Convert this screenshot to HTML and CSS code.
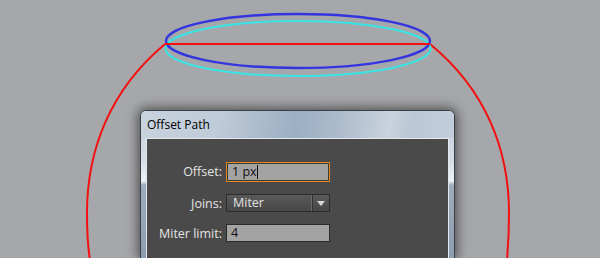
FILE: index.html
```html
<!DOCTYPE html>
<html lang="en">
  <head>
    <meta charset="UTF-8" />
    <title>Offset Path</title>
    <link rel="stylesheet" href="styles.css">
  </head>
  <body>
    <!-- artboard drawing behind the dialog -->
    <svg class="artboard" width="600" height="258" viewBox="0 0 600 258">
      <path class="red" d="M165,44 C110,90 87,150 87,213 C87,235 88,248 90,260" />
      <path class="red" d="M430,44 C486,90 509,150 509,213 C509,235 508,248 507,260" />
      <ellipse class="cyan" cx="298" cy="48.5" rx="132.5" ry="27.5" />
      <ellipse class="blue" cx="298" cy="41" rx="132" ry="27" />
      <line class="red" x1="165" y1="44" x2="430" y2="44" />
    </svg>

    <div class="dialog">
      <div class="titlebar">Offset Path</div>
      <div class="panel">
        <div class="form">
          <label class="lbl">Offset:</label>
          <div class="field focus">1 px<span class="caret"></span></div>

          <label class="lbl">Joins:</label>
          <div class="select">
            <span class="select-text">Miter</span>
            <span class="select-btn"></span>
          </div>

          <label class="lbl">Miter limit:</label>
          <div class="field">4</div>
        </div>
      </div>
    </div>
  </body>
</html>
```

FILE: styles.css
```css
* {
  margin: 0;
  padding: 0;
  box-sizing: border-box;
}

body {
  background-color: #a6a7aa;
  width: 600px;
  height: 258px;
  overflow: hidden;
  position: relative;
  font-family: "Open Sans", "Noto Sans", sans-serif;
}

.artboard {
  position: absolute;
  left: 0;
  top: 0;
}

.artboard .red {
  fill: none;
  stroke: #f41010;
  stroke-width: 2;
}

.artboard .blue {
  fill: none;
  stroke: #3535e0;
  stroke-width: 2.4;
}

.artboard .cyan {
  fill: none;
  stroke: #38e4e4;
  stroke-width: 2;
}

/* dialog window */
.dialog {
  position: absolute;
  left: 140px;
  top: 110px;
  width: 315px;
  height: 148px;
  border: 1px solid #3b4048;
  border-bottom: none;
  border-radius: 6px 6px 0 0;
  padding: 0 5px;
  background: linear-gradient(
    to bottom,
    #c3ced9 0px,
    #d6dee6 50px,
    #eef2f5 70px,
    #9eadbd 74px,
    #8d9db0 100%
  );
  box-shadow: 0 0 12px 2px rgba(0, 0, 0, 0.55);
  display: flex;
  flex-direction: column;
}

.titlebar {
  height: 27px;
  margin: 0 -5px;
  padding: 5px 0 0 6px;
  font-size: 12px;
  color: #000000;
  border-radius: 5px 5px 0 0;
  background: linear-gradient(
    100deg,
    #c8d3de 0%,
    #bfcbd8 25%,
    #a9b9cb 40%,
    #9cafc4 50%,
    #abbacb 62%,
    #bcc8d5 72%,
    #c9d3de 79%,
    #bac7d4 86%,
    #c2cedb 100%
  );
}

.panel {
  flex: 1;
  background-color: #4a4a4a;
  border: 1px solid #e2e8ee;
  border-bottom: none;
}

.form {
  display: grid;
  grid-template-columns: 75px 104px;
  grid-template-rows: 20px 18px 18px;
  column-gap: 4px;
  row-gap: 12px;
  padding-top: 23px;
}

.lbl {
  font-size: 12.5px;
  color: #e4e4e4;
  text-align: right;
  line-height: 20px;
}

.field {
  background-color: #a3a3a3;
  border: 1px solid #2b2b2b;
  font-size: 12.5px;
  color: #111111;
  padding-left: 4px;
  line-height: 16px;
  display: flex;
  align-items: center;
}

.field.focus {
  border: 1px solid #e5891e;
  box-shadow: inset 0 0 0 1px #3a3a3a;
  padding-left: 5px;
}

.caret {
  width: 1px;
  height: 14px;
  background-color: #111111;
}

.select {
  display: flex;
  background: linear-gradient(to bottom, #5a5a5a, #474747);
  border: 1px solid #2c2c2c;
  color: #e2e2e2;
  font-size: 12.5px;
}

.select-text {
  flex: 1;
  padding-left: 6px;
  line-height: 15px;
}

.select-btn {
  width: 18px;
  border-left: 1px solid #6a6a6a;
  box-shadow: inset 1px 0 0 #333333;
  position: relative;
}

.select-btn::after {
  content: "";
  position: absolute;
  left: 5px;
  top: 6px;
  border-left: 4px solid transparent;
  border-right: 4px solid transparent;
  border-top: 5px solid #d8d8d8;
}
```
